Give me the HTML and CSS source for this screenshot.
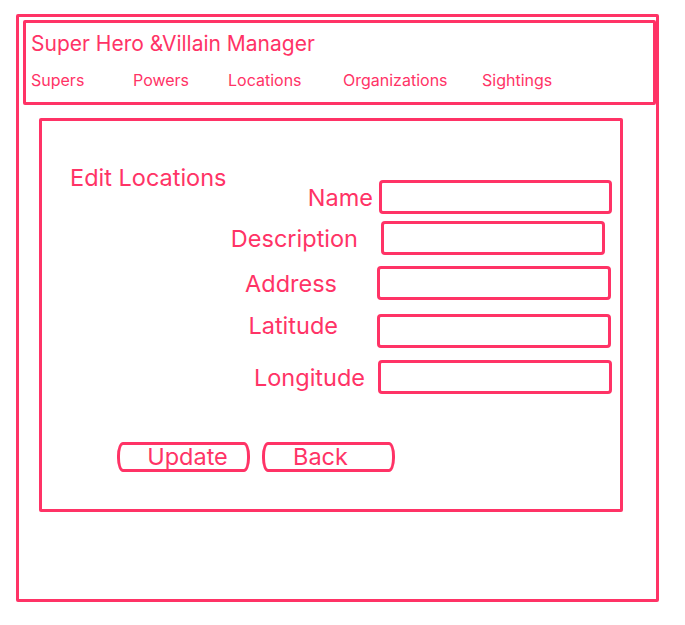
FILE: index.html
```html
<!DOCTYPE html>
<html lang="en">
<head>
<meta charset="utf-8">
<title>Edit Locations</title>
<link rel="stylesheet" href="styles.css">
</head>
<body>
<div class="frame">
  <header class="header">
    <div class="title">Super Hero &amp;Villain Manager</div>
    <nav class="nav">
      <span class="nav-item nav-supers">Supers</span>
      <span class="nav-item nav-powers">Powers</span>
      <span class="nav-item nav-locations">Locations</span>
      <span class="nav-item nav-orgs">Organizations</span>
      <span class="nav-item">Sightings</span>
    </nav>
  </header>
  <main class="content">
    <div class="top">
      <h1 class="heading">Edit Locations</h1>
      <form class="form">
        <div class="row row-name"><label class="label">Name</label><span class="input"></span></div>
        <div class="row row-desc"><label class="label">Description</label><span class="input"></span></div>
        <div class="row row-addr"><label class="label">Address</label><span class="input"></span></div>
        <div class="row row-lat"><label class="label">Latitude</label><span class="input"></span></div>
        <div class="row row-long"><label class="label">Longitude</label><span class="input"></span></div>
      </form>
    </div>
    <div class="buttons">
      <span class="btn btn-update">Update</span>
      <span class="btn btn-back">Back</span>
    </div>
  </main>
</div>
</body>
</html>
```

FILE: styles.css
```css
* { box-sizing: border-box; }
html, body { margin: 0; padding: 0; background: #fff; }
body {
  font-family: Inter, "Open Sans", "Liberation Sans", sans-serif;
  color: #ff3366;
}
.frame {
  margin: 14px 0 0 16px;
  width: 643px;
  height: 588px;
  border: 3px solid #ff3366;
  border-radius: 2px;
  padding: 3px 0 0 4px;
}
.header {
  width: 633px;
  height: 85px;
  border: 3px solid #ff3366;
  border-radius: 2px;
  padding: 8px 0 0 5px;
}
.title {
  font-size: 21px;
  line-height: 26px;
  font-weight: 400;
}
.nav {
  display: flex;
  margin-top: 13px;
  font-size: 16px;
  line-height: 20px;
}
.nav-item { white-space: nowrap; }
.nav-supers { width: 102px; }
.nav-powers { width: 95px; }
.nav-locations { width: 115px; }
.nav-orgs { width: 139px; }
.content {
  margin: 13px 0 0 16px;
  width: 584px;
  height: 394px;
  border: 3px solid #ff3366;
  border-radius: 2px;
}
.top { display: flex; }
.heading {
  margin: 44px 0 0 28px;
  font-size: 23.5px;
  line-height: 26px;
  font-weight: 400;
  white-space: nowrap;
}
.form {
  flex: 1;
  margin-top: 59px;
}
.row {
  display: flex;
  align-items: center;
  justify-content: flex-end;
  font-size: 23.5px;
}
.label { white-space: nowrap; }
.input {
  display: block;
  height: 34px;
  border: 3px solid #ff3366;
  border-radius: 4px;
}
.row-name { padding-right: 8px; }
.row-name .label { margin-right: 6px; }
.row-name .input { width: 233px; }
.row-desc { margin-top: 7px; padding-right: 15px; }
.row-desc .label { margin-right: 23px; }
.row-desc .input { width: 224px; }
.row-addr { margin-top: 11px; padding-right: 9px; }
.row-addr .label { margin-right: 40px; }
.row-addr .input { width: 234px; }
.row-lat { margin-top: 14px; padding-right: 9px; }
.row-lat .label { margin-right: 39px; position: relative; top: -6px; }
.row-lat .input { width: 234px; }
.row-long { margin-top: 12px; padding-right: 8px; }
.row-long .label { margin-right: 13px; }
.row-long .input { width: 234px; }
.buttons {
  display: flex;
  gap: 12px;
  margin: 48px 0 0 75px;
}
.btn {
  display: flex;
  align-items: center;
  justify-content: center;
  width: 133px;
  height: 30px;
  border: 3px solid #ff3366;
  border-radius: 6px / 14px;
  font-size: 23.5px;
  line-height: 24px;
}
.btn-update { padding-left: 8px; }
.btn-back { padding-right: 16px; }
```
